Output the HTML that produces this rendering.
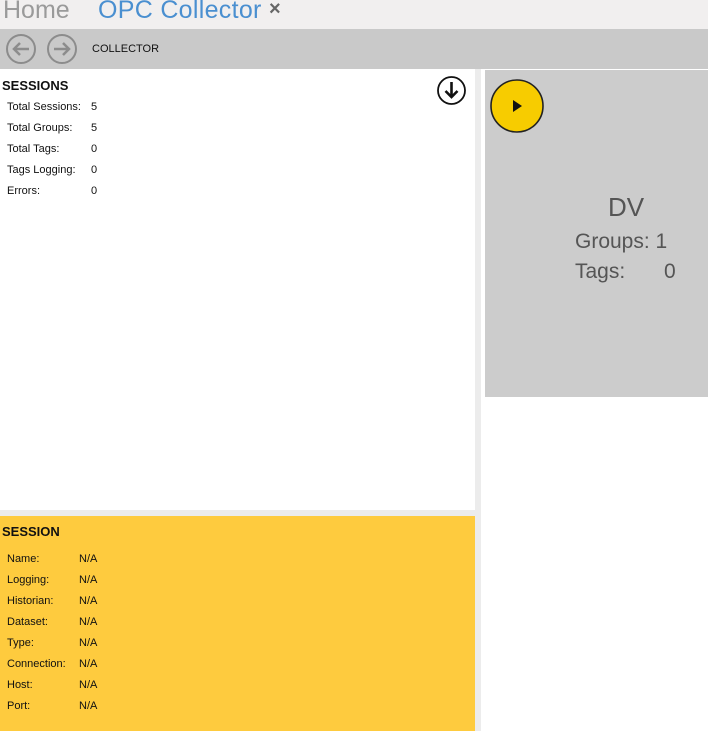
<!DOCTYPE html>
<html><head><style>
*{margin:0;padding:0;box-sizing:border-box}
body{width:708px;height:731px;overflow:hidden;background:#fff;font-family:"Liberation Sans",sans-serif;position:relative}
.abs{position:absolute}
.tab{top:-4px;font-size:25px;white-space:nowrap}
.row{position:absolute;font-size:11px;color:#111;white-space:nowrap}
</style></head><body>
<div class="abs" style="left:0;top:0;width:708px;height:29px;background:#f1efef"></div>
<div class="abs tab" style="left:3px;color:#9a9a9a">Home</div>
<div class="abs tab" style="left:98px;color:#4a8fd0;letter-spacing:0.3px">OPC Collector</div>
<div class="abs" style="left:269px;top:-2px;font-size:20px;color:#666;font-weight:bold">×</div>
<div class="abs" style="left:0;top:29px;width:708px;height:40px;background:#c9c9c9"></div>
<svg class="abs" style="left:5px;top:33px" width="80" height="32" viewBox="0 0 80 32">
<circle cx="16" cy="16" r="14" fill="none" stroke="#8c8c8c" stroke-width="2"/>
<path d="M24 16H9M15 10l-6 6 6 6" fill="none" stroke="#8c8c8c" stroke-width="2.5"/>
<circle cx="57" cy="16" r="14" fill="none" stroke="#8c8c8c" stroke-width="2"/>
<path d="M49 16h15M58 10l6 6-6 6" fill="none" stroke="#8c8c8c" stroke-width="2.5"/>
</svg>
<div class="abs" style="left:92px;top:43px;font-size:11px;color:#111">COLLECTOR</div>
<div class="abs" style="left:475px;top:69px;width:6px;height:662px;background:#ececec"></div>
<div class="abs" style="left:0;top:510px;width:475px;height:6px;background:#ececec"></div>
<div class="abs" style="left:2px;top:78px;font-size:13px;font-weight:bold;color:#111">SESSIONS</div>
<div class="row" style="left:7px;top:101px">Total Sessions:</div><div class="row" style="left:91px;top:101px">5</div>
<div class="row" style="left:7px;top:122px">Total Groups:</div><div class="row" style="left:91px;top:122px">5</div>
<div class="row" style="left:7px;top:143px">Total Tags:</div><div class="row" style="left:91px;top:143px">0</div>
<div class="row" style="left:7px;top:164px">Tags Logging:</div><div class="row" style="left:91px;top:164px">0</div>
<div class="row" style="left:7px;top:185px">Errors:</div><div class="row" style="left:91px;top:185px">0</div>
<svg class="abs" style="left:436px;top:75px" width="31" height="31" viewBox="0 0 31 31">
<circle cx="15.5" cy="15.5" r="13.5" fill="#fff" stroke="#111" stroke-width="1.8"/>
<path d="M15.5 7v15M9.5 16l6 6 6-6" fill="none" stroke="#111" stroke-width="2.6"/>
</svg>
<div class="abs" style="left:485px;top:70px;width:223px;height:327px;background:#cccccc"></div>
<svg class="abs" style="left:489px;top:78px" width="56" height="56" viewBox="0 0 56 56">
<circle cx="28" cy="28" r="26" fill="#f7cc00" stroke="#222" stroke-width="1.6"/>
<path d="M24 22v12l9-6z" fill="#111"/>
</svg>
<div class="abs" style="left:608px;top:192px;font-size:26px;color:#555">DV</div>
<div class="abs" style="left:575px;top:230px;font-size:21px;color:#555">Groups: 1</div>
<div class="abs" style="left:575px;top:260px;font-size:21px;color:#555">Tags:</div>
<div class="abs" style="left:664px;top:260px;font-size:21px;color:#555">0</div>
<div class="abs" style="left:0;top:516px;width:475px;height:215px;background:#fecb3e"></div>
<div class="abs" style="left:2px;top:524px;font-size:13px;font-weight:bold;color:#111">SESSION</div>
<div class="row" style="left:7px;top:553px">Name:</div><div class="row" style="left:79px;top:553px">N/A</div>
<div class="row" style="left:7px;top:574px">Logging:</div><div class="row" style="left:79px;top:574px">N/A</div>
<div class="row" style="left:7px;top:595px">Historian:</div><div class="row" style="left:79px;top:595px">N/A</div>
<div class="row" style="left:7px;top:616px">Dataset:</div><div class="row" style="left:79px;top:616px">N/A</div>
<div class="row" style="left:7px;top:637px">Type:</div><div class="row" style="left:79px;top:637px">N/A</div>
<div class="row" style="left:7px;top:658px">Connection:</div><div class="row" style="left:79px;top:658px">N/A</div>
<div class="row" style="left:7px;top:679px">Host:</div><div class="row" style="left:79px;top:679px">N/A</div>
<div class="row" style="left:7px;top:700px">Port:</div><div class="row" style="left:79px;top:700px">N/A</div>
</body></html>
